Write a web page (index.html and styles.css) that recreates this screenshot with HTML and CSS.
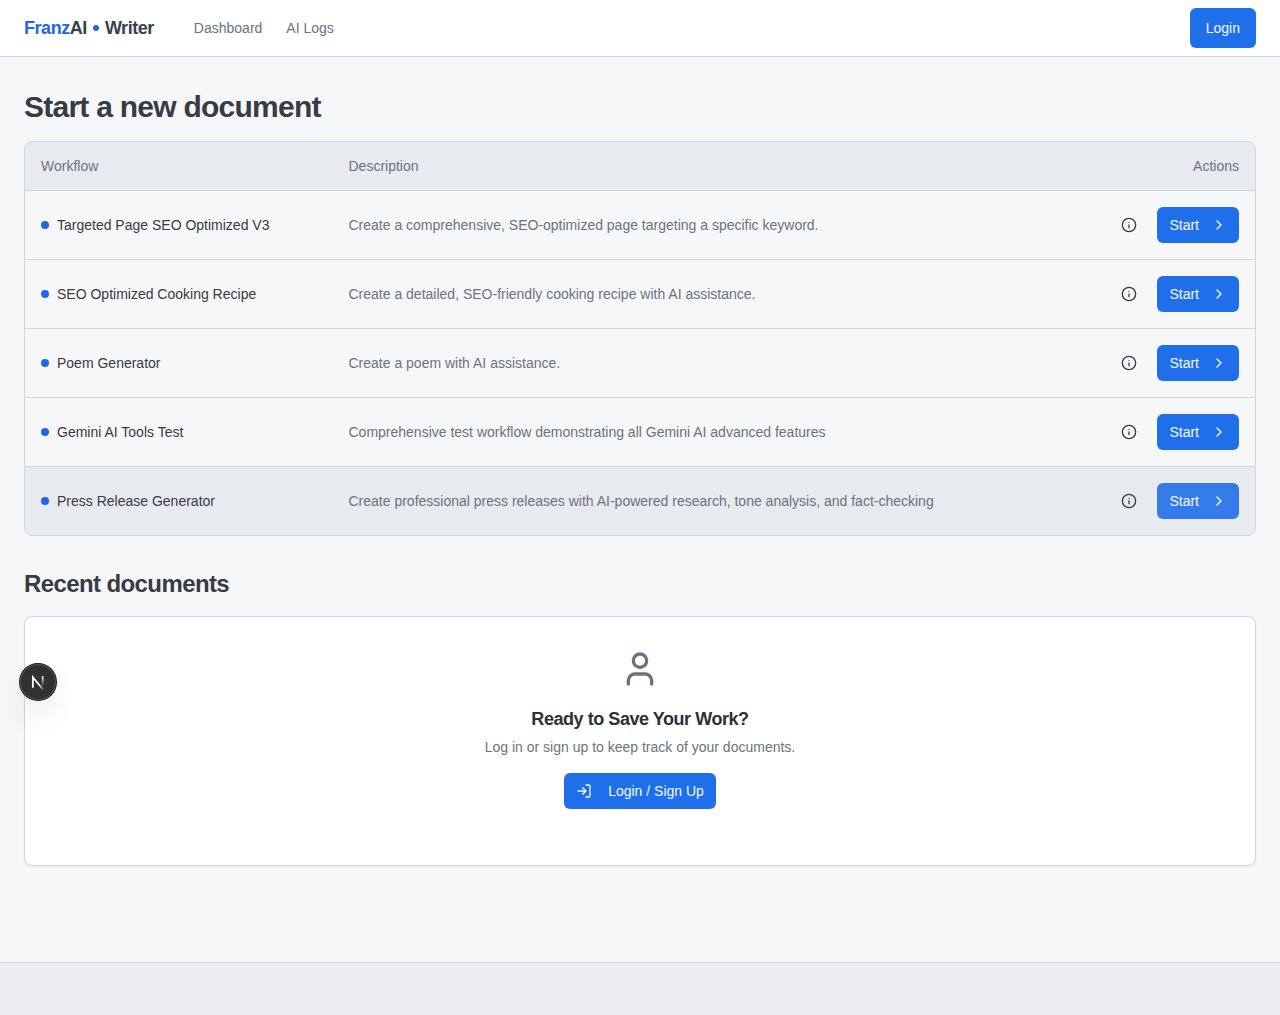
FILE: index.html
```html
<!DOCTYPE html>
<html lang="en">
<head>
<meta charset="utf-8">
<meta name="viewport" content="width=device-width, initial-scale=1">
<title>FranzAI Writer</title>
<link rel="stylesheet" href="styles.css">
</head>
<body>
<svg class="sprite" aria-hidden="true">
  <symbol id="info" viewBox="0 0 24 24"><circle cx="12" cy="12" r="10"/><path d="M12 16v-4M12 8h.01"/></symbol>
  <symbol id="chevron" viewBox="0 0 24 24"><path d="m9 18 6-6-6-6"/></symbol>
  <symbol id="login" viewBox="0 0 24 24"><path d="M15 3h4a2 2 0 0 1 2 2v14a2 2 0 0 1-2 2h-4M10 17l5-5-5-5M15 12H3"/></symbol>
  <symbol id="user" viewBox="0 0 24 24"><path d="M19 21v-2a4 4 0 0 0-4-4H9a4 4 0 0 0-4 4v2"/><circle cx="12" cy="7" r="4"/></symbol>
</svg>
<header class="header">
  <a class="brand" href="#"><span><span class="brand-accent">Franz</span>AI</span><span class="brand-dot"></span><span>Writer</span></a>
  <nav class="nav">
    <a href="#">Dashboard</a>
    <a href="#">AI Logs</a>
  </nav>
  <button class="button button-large" type="button">Login</button>
</header>
<main class="main">
  <section class="workflows">
    <h1 class="title">Start a new document</h1>
    <div class="table-frame">
      <table class="table">
        <thead>
          <tr><th class="col-name" scope="col">Workflow</th><th class="col-description" scope="col">Description</th><th class="col-actions" scope="col">Actions</th></tr>
        </thead>
        <tbody>
          <tr>
            <td><div class="name"><span class="dot"></span>Targeted Page SEO Optimized V3</div></td>
            <td class="description">Create a comprehensive, SEO-optimized page targeting a specific keyword.</td>
            <td><div class="actions"><button class="icon-button" type="button" aria-label="Info"><svg class="icon"><use href="#info"/></svg></button><button class="button button-start" type="button">Start<svg class="icon"><use href="#chevron"/></svg></button></div></td>
          </tr>
          <tr>
            <td><div class="name"><span class="dot"></span>SEO Optimized Cooking Recipe</div></td>
            <td class="description">Create a detailed, SEO-friendly cooking recipe with AI assistance.</td>
            <td><div class="actions"><button class="icon-button" type="button" aria-label="Info"><svg class="icon"><use href="#info"/></svg></button><button class="button button-start" type="button">Start<svg class="icon"><use href="#chevron"/></svg></button></div></td>
          </tr>
          <tr>
            <td><div class="name"><span class="dot"></span>Poem Generator</div></td>
            <td class="description">Create a poem with AI assistance.</td>
            <td><div class="actions"><button class="icon-button" type="button" aria-label="Info"><svg class="icon"><use href="#info"/></svg></button><button class="button button-start" type="button">Start<svg class="icon"><use href="#chevron"/></svg></button></div></td>
          </tr>
          <tr>
            <td><div class="name"><span class="dot"></span>Gemini AI Tools Test</div></td>
            <td class="description">Comprehensive test workflow demonstrating all Gemini AI advanced features</td>
            <td><div class="actions"><button class="icon-button" type="button" aria-label="Info"><svg class="icon"><use href="#info"/></svg></button><button class="button button-start" type="button">Start<svg class="icon"><use href="#chevron"/></svg></button></div></td>
          </tr>
          <tr class="active">
            <td><div class="name"><span class="dot"></span>Press Release Generator</div></td>
            <td class="description">Create professional press releases with AI-powered research, tone analysis, and fact-checking</td>
            <td><div class="actions"><button class="icon-button" type="button" aria-label="Info"><svg class="icon"><use href="#info"/></svg></button><button class="button button-start" type="button">Start<svg class="icon"><use href="#chevron"/></svg></button></div></td>
          </tr>
        </tbody>
      </table>
    </div>
  </section>
  <section class="recent">
    <h2 class="subtitle">Recent documents</h2>
    <div class="card">
      <svg class="user-icon" aria-hidden="true"><use href="#user"/></svg>
      <h3 class="card-title">Ready to Save Your Work?</h3>
      <p class="card-text">Log in or sign up to keep track of your documents.</p>
      <button class="button button-signup" type="button"><svg class="icon"><use href="#login"/></svg>Login / Sign Up</button>
    </div>
  </section>
</main>
<footer class="footer"></footer>
<button class="dev-badge" type="button" aria-label="Developer tools">
  <svg viewBox="0 0 40 40" aria-hidden="true">
    <defs>
      <linearGradient id="diagonal" x1="22" y1="22" x2="27" y2="29" gradientUnits="userSpaceOnUse"><stop stop-color="#fff"/><stop offset="1" stop-color="#fff" stop-opacity="0.1"/></linearGradient>
      <linearGradient id="stem" x1="25" y1="14" x2="25" y2="25" gradientUnits="userSpaceOnUse"><stop stop-color="#fff"/><stop offset="1" stop-color="#fff" stop-opacity="0"/></linearGradient>
    </defs>
    <path d="M14.3 26.3V14.6L25.6 28.3" fill="none" stroke="url(#diagonal)" stroke-width="2"/>
    <path d="M25.2 13.6v11" stroke="url(#stem)" stroke-width="1.9"/>
  </svg>
</button>
</body>
</html>
```
FILE: styles.css
```css
* { box-sizing: border-box; margin: 0; }

body {
  display: flex;
  flex-direction: column;
  min-height: 100vh;
  background: #f6f7f9;
  color: #373b44;
  font: 14px/20px "Liberation Sans", Arial, sans-serif;
}

a { color: inherit; text-decoration: none; }
button { font: inherit; border: 0; cursor: pointer; }

.sprite { display: none; }

.icon, .user-icon {
  fill: none;
  stroke: currentColor;
  stroke-width: 2;
  stroke-linecap: round;
  stroke-linejoin: round;
}
.icon { width: 16px; height: 16px; }

.header {
  display: flex;
  align-items: center;
  height: 57px;
  padding: 0 24px;
  background: #fff;
  border-bottom: 1px solid #d1d6de;
}
.brand { display: flex; align-items: center; gap: 6px; color: #374151; font-size: 18px; font-weight: 700; line-height: 28px; }
.brand, .title, .subtitle, .card-title { letter-spacing: -0.025em; }
.brand-accent { color: #2463eb; }
.brand-dot { width: 6px; height: 6px; border-radius: 50%; background: #2463eb; }
.nav { display: flex; gap: 24px; margin-left: 40px; color: #6b7280; }

.button {
  display: inline-flex;
  align-items: center;
  justify-content: center;
  height: 36px;
  padding: 0 12px;
  border-radius: 6px;
  background: #1f6feb;
  color: #f6f7f9;
  white-space: nowrap;
}
.button-large { height: 40px; padding: 0 16px; margin-left: auto; }
.button-start { gap: 12px; }
.button-signup { gap: 16px; }

.main { flex: 1; padding: 32px 24px 96px; }

.title { margin-bottom: 16px; font-size: 30px; line-height: 36px; }
.subtitle { margin-bottom: 16px; font-size: 24px; line-height: 32px; }

.table-frame { overflow: hidden; border: 1px solid #d1d6de; border-radius: 8px; }
.table { width: 100%; table-layout: fixed; border-collapse: collapse; }
.table th { height: 48px; padding: 0 16px; background: #e7eaef; color: #6b7280; font-weight: 400; text-align: left; }
.table td { padding: 16px; }
.table tbody tr { border-top: 1px solid #d1d6de; }
.table .col-name { width: 25%; }
.table .col-description { width: 55%; }
.table .col-actions { text-align: right; }
.active { background: #e7eaef; }
.active .button { background: #347bea; }
.name { display: flex; align-items: center; gap: 8px; }
.dot { flex: none; width: 8px; height: 8px; border-radius: 50%; background: #2463eb; }
.table .description { color: #6b7280; }
.actions { display: flex; justify-content: flex-end; gap: 10px; }
.icon-button { display: flex; align-items: center; justify-content: center; width: 36px; height: 36px; padding: 0; background: none; color: #373b44; }

.recent { margin-top: 32px; }
.card {
  display: flex;
  flex-direction: column;
  align-items: center;
  padding: 32px 24px 56px;
  border: 1px solid #d1d6de;
  border-radius: 8px;
  background: #fff;
  box-shadow: 0 1px 2px rgba(0, 0, 0, .05);
}
.user-icon { width: 40px; height: 40px; margin-bottom: 16px; color: #6b7280; }
.card-title { color: #2d3038; font-size: 18px; line-height: 28px; }
.card-text { margin: 4px 0 16px; color: #6b7280; }

.footer { height: 53px; border-top: 1px solid #d1d6de; background: #edeef2; }

.dev-badge {
  position: fixed;
  left: 20px;
  bottom: 315px;
  width: 36px;
  height: 36px;
  padding: 0;
  border-radius: 50%;
  background: #303131;
  box-shadow: 0 0 0 1px #171717, inset 0 0 0 1px #535353, 0 16px 32px -8px rgba(0, 0, 0, .24);
}
.dev-badge svg { display: block; width: 36px; height: 36px; }
```
